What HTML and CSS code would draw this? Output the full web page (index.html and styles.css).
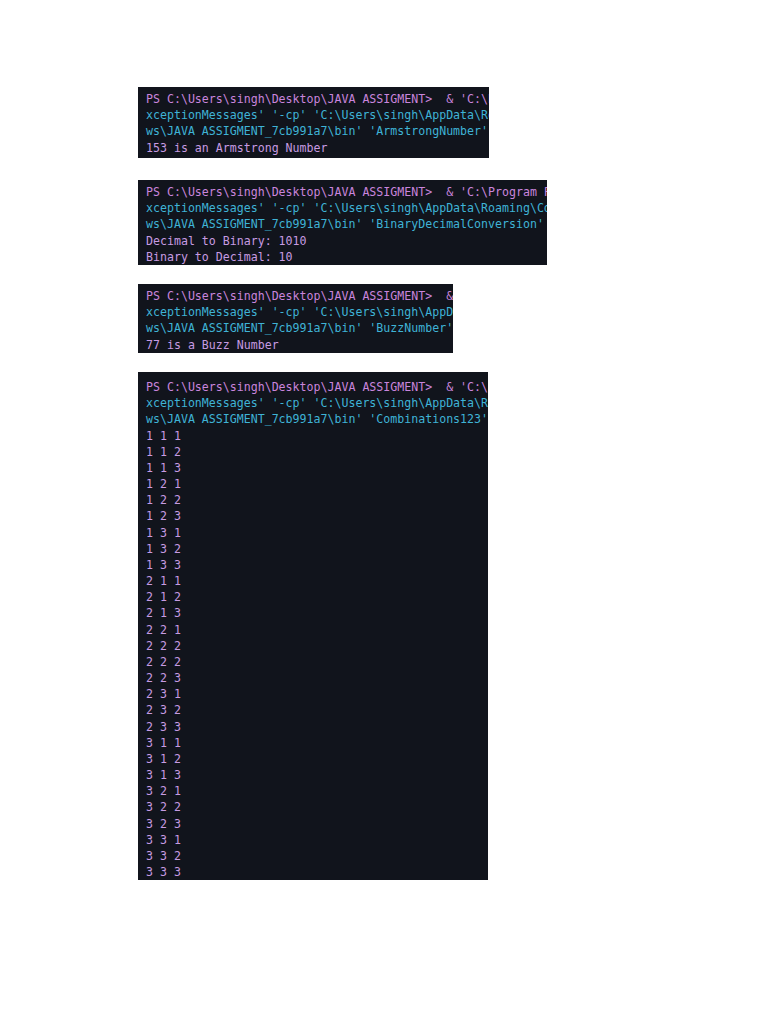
FILE: index.html
```html
<!DOCTYPE html>
<html lang="en">
<head>
<meta charset="utf-8">
<title>Java Assignment Outputs</title>
<link rel="stylesheet" href="styles.css">
</head>
<body>
<main class="page">
  <section class="term t1">
    <div class="ln p">PS C:\Users\singh\Desktop\JAVA ASSIGMENT>  &amp; 'C:\Program Files\Java\jdk\bin\java.exe'</div>
    <div class="ln c">xceptionMessages' '-cp' 'C:\Users\singh\AppData\Roaming\Code\User\workspaceStorage'</div>
    <div class="ln c">ws\JAVA ASSIGMENT_7cb991a7\bin' 'ArmstrongNumber' </div>
    <div class="ln o">153 is an Armstrong Number</div>
    <div class="ln o dim">PS C:\Users\singh\Desktop\JAVA ASSIGMENT></div>
  </section>

  <section class="term t2">
    <div class="ln p">PS C:\Users\singh\Desktop\JAVA ASSIGMENT>  &amp; 'C:\Program Files\Java\jdk\bin\java.exe'</div>
    <div class="ln c">xceptionMessages' '-cp' 'C:\Users\singh\AppData\Roaming\Code\User\workspaceStorage'</div>
    <div class="ln c">ws\JAVA ASSIGMENT_7cb991a7\bin' 'BinaryDecimalConversion' </div>
    <div class="ln o">Decimal to Binary: 1010</div>
    <div class="ln o">Binary to Decimal: 10</div>
  </section>

  <section class="term t3">
    <div class="ln p">PS C:\Users\singh\Desktop\JAVA ASSIGMENT>  &amp; 'C:\Program Files\Java\jdk\bin\java.exe'</div>
    <div class="ln c">xceptionMessages' '-cp' 'C:\Users\singh\AppData\Roaming\Code\User\workspaceStorage'</div>
    <div class="ln c">ws\JAVA ASSIGMENT_7cb991a7\bin' 'BuzzNumber' </div>
    <div class="ln o">77 is a Buzz Number</div>
  </section>

  <section class="term t4">
    <div class="ln p">PS C:\Users\singh\Desktop\JAVA ASSIGMENT>  &amp; 'C:\Program Files\Java\jdk\bin\java.exe'</div>
    <div class="ln c">xceptionMessages' '-cp' 'C:\Users\singh\AppData\Roaming\Code\User\workspaceStorage'</div>
    <div class="ln c">ws\JAVA ASSIGMENT_7cb991a7\bin' 'Combinations123' </div>
    <div class="ln o">1 1 1</div>
    <div class="ln o">1 1 2</div>
    <div class="ln o">1 1 3</div>
    <div class="ln o">1 2 1</div>
    <div class="ln o">1 2 2</div>
    <div class="ln o">1 2 3</div>
    <div class="ln o">1 3 1</div>
    <div class="ln o">1 3 2</div>
    <div class="ln o">1 3 3</div>
    <div class="ln o">2 1 1</div>
    <div class="ln o">2 1 2</div>
    <div class="ln o">2 1 3</div>
    <div class="ln o">2 2 1</div>
    <div class="ln o">2 2 2</div>
    <div class="ln o">2 2 2</div>
    <div class="ln o">2 2 3</div>
    <div class="ln o">2 3 1</div>
    <div class="ln o">2 3 2</div>
    <div class="ln o">2 3 3</div>
    <div class="ln o">3 1 1</div>
    <div class="ln o">3 1 2</div>
    <div class="ln o">3 1 3</div>
    <div class="ln o">3 2 1</div>
    <div class="ln o">3 2 2</div>
    <div class="ln o">3 2 3</div>
    <div class="ln o">3 3 1</div>
    <div class="ln o">3 3 2</div>
    <div class="ln o">3 3 3</div>
  </section>
</main>
</body>
</html>
```

FILE: styles.css
```css
html, body {
  margin: 0;
  padding: 0;
  background: #ffffff;
}

.page {
  display: flex;
  flex-direction: column;
  align-items: flex-start;
  padding: 87px 0 0 138px;
}

.term {
  background: #11141c;
  overflow: hidden;
  box-sizing: border-box;
  padding: 3.5px 0 0 8px;
  font-family: "DejaVu Sans Mono", "Liberation Mono", monospace;
  font-size: 11.6px;
  line-height: 16.4px;
}

.ln {
  white-space: pre;
}

.p { color: #c985dc; }
.c { color: #3fb3d6; }
.o { color: #c79be2; }
.dim { opacity: 0.35; }

.t1 { width: 351px; height: 71px; }
.t2 { width: 409px; height: 85px; margin-top: 22px; }
.t3 { width: 315px; height: 69px; margin-top: 19px; }
.t4 {
  width: 350px;
  height: 508px;
  margin-top: 19px;
  padding-top: 7px;
  line-height: 16.17px;
}
```
